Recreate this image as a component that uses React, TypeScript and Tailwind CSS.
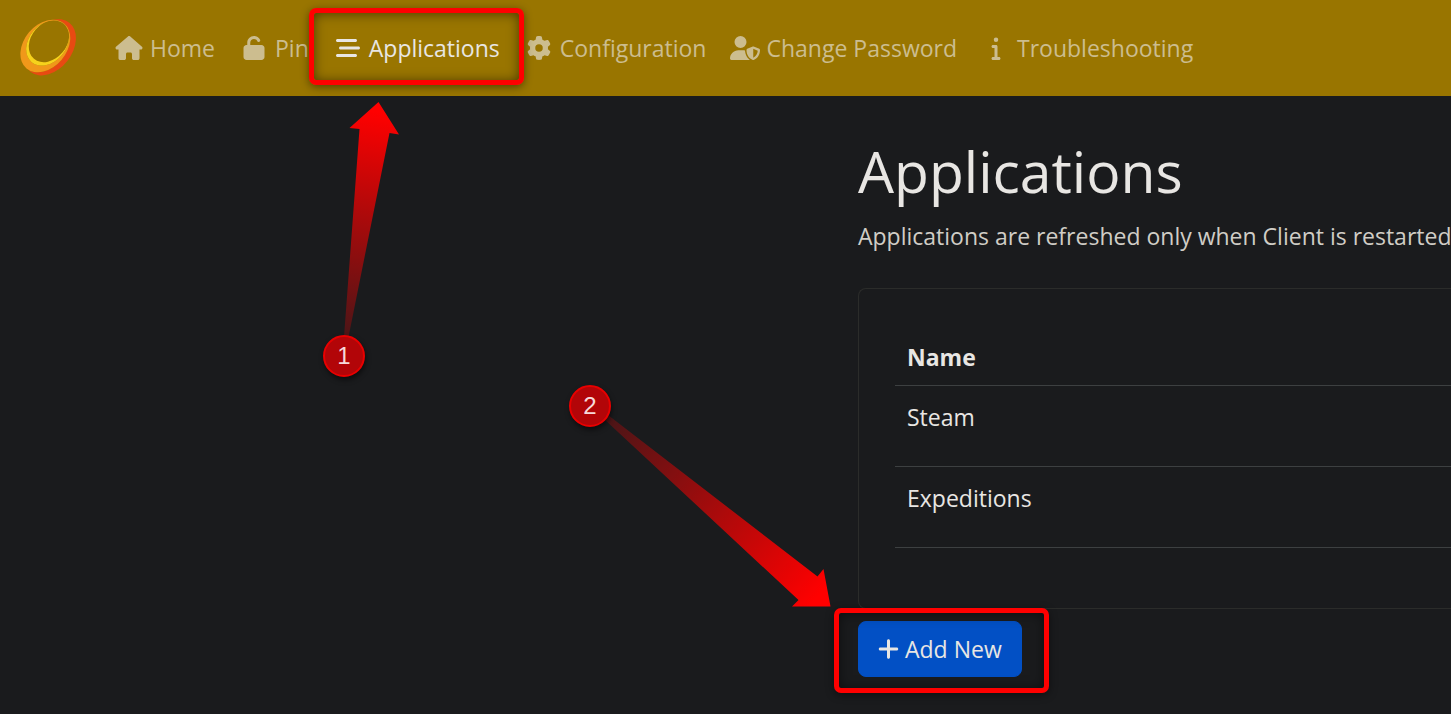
import { clsx } from "clsx";
import type { IconType } from "react-icons";
import {
  FaBarsStaggered,
  FaGear,
  FaHouse,
  FaInfo,
  FaPlus,
  FaUnlock,
  FaUserShield,
} from "react-icons/fa6";

type NavItem = { label: string; icon: IconType; active?: boolean };

const navItems: NavItem[] = [
  { label: "Home", icon: FaHouse },
  { label: "Pin", icon: FaUnlock },
  { label: "Applications", icon: FaBarsStaggered, active: true },
  { label: "Configuration", icon: FaGear },
  { label: "Change Password", icon: FaUserShield },
  { label: "Troubleshooting", icon: FaInfo },
];

const apps = ["Steam", "Expeditions"];

export default function App() {
  return (
    <div className="relative min-h-screen overflow-x-hidden bg-[#1a1b1d] font-['Open_Sans','Noto_Sans',sans-serif] text-[23px] leading-9 text-[#e8e6e3]">
      <Navbar />
      <main className="pt-[42px] pl-[858px]">
        <h1 className="text-[57px] leading-[66px] whitespace-nowrap">Applications</h1>
        <p className="mt-[14px] whitespace-nowrap text-[#d0cdc6]">
          Applications are refreshed only when Client is restarted
        </p>
        <AppsCard />
        <button
          type="button"
          className="mt-3 flex h-14 items-center gap-[6px] rounded-lg border border-[#0250c5] bg-[#0250c5] px-[19px] whitespace-nowrap"
        >
          <FaPlus className="h-6 w-[21px]" aria-hidden="true" />
          Add New
        </button>
      </main>
      <Annotations />
    </div>
  );
}

function Navbar() {
  return (
    <header className="flex h-24 items-center bg-[#997500] pl-[18px]">
      <a href="#" aria-label="Dashboard" className="mr-6 shrink-0">
        <Logo />
      </a>
      <nav className="flex">
        {navItems.map(({ label, icon: Icon, active }) => (
          <a
            key={label}
            href="#"
            className={clsx(
              "flex items-center gap-[6px] px-3 whitespace-nowrap",
              active ? "text-[#e8e6e3]" : "text-[#ccbd8f]"
            )}
          >
            <Icon className="h-6 w-[30px] shrink-0" aria-hidden="true" />
            {label}
          </a>
        ))}
      </nav>
    </header>
  );
}

// Three tilted rings, each one cut out by the next
function Logo() {
  return (
    <svg className="h-15 w-15" viewBox="24 23 180 180" aria-hidden="true">
      <mask id="cutRed" maskUnits="userSpaceOnUse" x="0" y="0" width="225" height="225">
        <rect width="225" height="225" fill="#fff" />
        <ellipse cx="106" cy="107" rx="64" ry="88" transform="rotate(40 106 107)" fill="#000" />
      </mask>
      <mask id="cutOrange" maskUnits="userSpaceOnUse" x="0" y="0" width="225" height="225">
        <rect width="225" height="225" fill="#fff" />
        <ellipse cx="113" cy="98" rx="56" ry="75" transform="rotate(40 113 98)" fill="#000" />
      </mask>
      <mask id="cutYellow" maskUnits="userSpaceOnUse" x="0" y="0" width="225" height="225">
        <rect width="225" height="225" fill="#fff" />
        <ellipse cx="117" cy="92" rx="53" ry="70" transform="rotate(40 117 92)" fill="#000" />
      </mask>
      <g mask="url(#cutRed)">
        <ellipse cx="120" cy="111" rx="66" ry="94" transform="rotate(38 120 111)" fill="#e84a12" />
      </g>
      <g mask="url(#cutOrange)">
        <ellipse cx="106" cy="107" rx="64" ry="88" transform="rotate(40 106 107)" fill="#f0981a" />
      </g>
      <g mask="url(#cutYellow)">
        <ellipse cx="113" cy="98" rx="56" ry="75" transform="rotate(40 113 98)" fill="#f6d21c" />
      </g>
    </svg>
  );
}

function AppsCard() {
  return (
    <section className="mt-[34px] rounded-l-lg border border-r-0 border-[#2b2c2a] pt-9 pb-[60px] pl-9">
      <table className="w-full border-collapse text-left">
        <thead>
          <tr className="border-b border-[#3d4041]">
            <th className="h-15 px-3 pt-1 font-bold">Name</th>
          </tr>
        </thead>
        <tbody>
          {apps.map((name) => (
            <tr key={name} className="border-b border-[#3d4041]">
              <td className="h-[81px] px-3 pt-[13px] align-top">{name}</td>
            </tr>
          ))}
        </tbody>
      </table>
    </section>
  );
}

// Walkthrough callouts drawn over the page
function Annotations() {
  return (
    <div className="pointer-events-none absolute inset-0">
      <Highlight className="top-2 left-[309px] h-[77px]" />
      <Highlight className="top-[608px] left-[834px] h-[85px]" />
      <svg className="absolute top-0 left-0" width="1060" height="700" aria-hidden="true">
        <defs>
          <linearGradient id="arrow1" gradientUnits="userSpaceOnUse" x1="378" y1="112" x2="344" y2="356">
            <stop offset="0" stopColor="#ff0000" />
            <stop offset="1" stopColor="#ff0000" stopOpacity="0.15" />
          </linearGradient>
          <linearGradient id="arrow2" gradientUnits="userSpaceOnUse" x1="818" y1="596" x2="590" y2="406">
            <stop offset="0" stopColor="#ff0000" />
            <stop offset="1" stopColor="#ff0000" stopOpacity="0.15" />
          </linearGradient>
        </defs>
        <polygon points="378.5,102 399,134.5 389.5,133 348.5,337 344,337 359.5,129 349.5,128" fill="url(#arrow1)" />
        <polygon points="830.5,606.5 792,606.5 798.5,600 604,419 608,415 817.5,576.5 823.5,569" fill="url(#arrow2)" />
      </svg>
      <Step number={1} className="top-[335px] left-[323px]" />
      <Step number={2} className="top-[385px] left-[569px]" />
    </div>
  );
}

function Highlight({ className }: { className: string }) {
  return (
    <div
      className={clsx(
        "absolute w-[215px] rounded-[7px] border-5 border-[#ff0000] shadow-[0_2px_8px_rgba(0,0,0,.45),inset_0_1px_12px_rgba(0,0,0,.5)]",
        className
      )}
    />
  );
}

function Step({ number, className }: { number: number; className: string }) {
  return (
    <div
      className={clsx(
        "absolute flex h-[42px] w-[42px] items-center justify-center rounded-full border-2 border-[#e80000] bg-[#b20508] font-['Liberation_Sans',sans-serif] text-2xl text-[#f6d9da] shadow-[1px_3px_5px_rgba(0,0,0,.5)]",
        className
      )}
    >
      {number}
    </div>
  );
}
